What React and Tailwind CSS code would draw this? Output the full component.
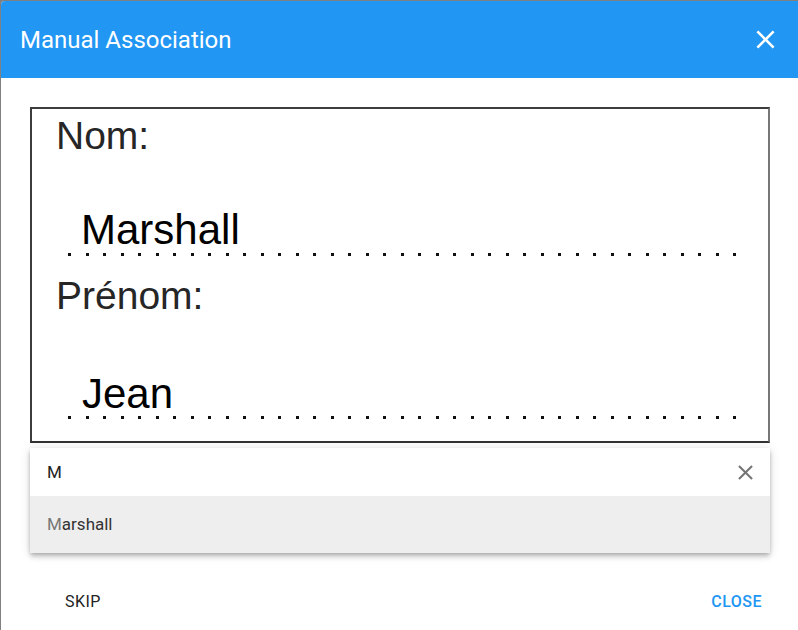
import React, { useState } from "react";

const CloseIcon = ({ size = 24, className = "" }) => (
  <svg
    width={size}
    height={size}
    viewBox="0 0 24 24"
    className={className}
    fill="currentColor"
  >
    <path d="M19 6.41L17.59 5 12 10.59 6.41 5 5 6.41 10.59 12 5 17.59 6.41 19 12 13.41 17.59 19 19 17.59 13.41 12z" />
  </svg>
);

const Dots = ({ className = "" }) => (
  <div className={`flex justify-between w-[668px] h-[3px] ${className}`}>
    {Array.from({ length: 39 }).map((_, i) => (
      <span key={i} className="block w-[3px] h-[3px] bg-[#111]" />
    ))}
  </div>
);

const App = () => {
  const [query, setQuery] = useState("M");
  const name = "Marshall";

  return (
    <div className="w-[798px] h-[630px] bg-[#808080] overflow-hidden pl-[1px] pt-[1px]">
      <div className="h-full bg-white rounded-tl-[4px] overflow-hidden flex flex-col">
        {/* Header */}
        <div className="h-[77px] bg-[#2196F3] flex items-center justify-between pl-[19px] pr-[17px] shrink-0">
          <h2 className="text-white text-[24px] leading-[32px] font-normal font-['Roboto',sans-serif]">
            Manual Association
          </h2>
          <button className="text-white">
            <CloseIcon size={31} />
          </button>
        </div>

        {/* Body */}
        <div className="pl-[29px] pr-[28px] pt-[29px]">
          {/* Scanned form */}
          <div className="h-[336px] border-2 border-[#3c3c3c] border-r-[#777] border-b-[#333] bg-white font-['Liberation_Sans',Arial,sans-serif] overflow-hidden">
            <div className="pt-[7px]">
              <div className="ml-[24px] text-[39px] leading-none text-[#262626]">
                Nom:
              </div>
              <div className="ml-[49px] mt-[54px] text-[42px] leading-none text-black">
                Marshall
              </div>
              <Dots className="ml-[36px] mt-[2px]" />
              <div className="ml-[24px] mt-[20px] text-[39px] leading-none text-[#262626]">
                Prénom:
              </div>
              <div className="ml-[50px] mt-[58px] text-[42px] leading-none text-black">
                Jean
              </div>
              <Dots className="ml-[36px] mt-[1px]" />
            </div>
          </div>

          {/* Autocomplete */}
          <div className="mt-[5px] bg-white shadow-[0_2px_4px_-1px_rgba(0,0,0,0.2),0_4px_5px_0_rgba(0,0,0,0.14),0_1px_10px_0_rgba(0,0,0,0.12)] font-['Roboto',sans-serif]">
            <div className="h-[48px] flex items-center pl-[17px] pr-[12px]">
              <input
                className="flex-1 text-[17px] leading-[48px] text-[#222] outline-none bg-transparent"
                value={query}
                onChange={(e) => setQuery(e.target.value)}
              />
              <button className="text-[#757575]" onClick={() => setQuery("")}>
                <CloseIcon size={25} />
              </button>
            </div>
            <div className="h-[57px] bg-[#eeeeee] flex items-center pl-[17px] text-[17px] leading-[57px] text-[#333]">
              <span className="text-[#777]">{name.slice(0, 1)}</span>
              <span>{name.slice(1)}</span>
            </div>
          </div>

          {/* Actions */}
          <div className="mt-[39px] flex justify-between font-['Roboto',sans-serif] text-[16px] leading-[20px] tracking-[0.03em]">
            <button className="ml-[35px] text-[#222] font-normal">SKIP</button>
            <button className="mr-[8px] text-[#2196F3] font-medium">CLOSE</button>
          </div>
        </div>
      </div>
    </div>
  );
};

export default App;
